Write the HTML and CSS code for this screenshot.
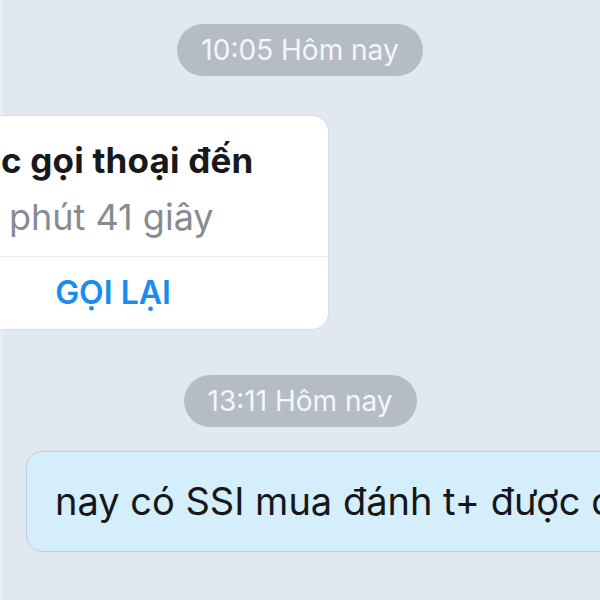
FILE: index.html
```html
<!DOCTYPE html>
<html lang="vi">
<head>
  <meta charset="UTF-8" />
  <meta name="viewport" content="width=device-width, initial-scale=1.0"/>
  <title>Tin nhắn</title>
  <link rel="stylesheet" href="styles.css">
</head>
<body>
  <div class="chat">
    <div class="time"><span>10:05 Hôm nay</span></div>

    <div class="call-card">
      <div class="call-info">
        <div class="call-title">c gọi thoại đến</div>
        <div class="call-length">phút 41 giây</div>
      </div>
      <div class="call-action">GỌI LẠI</div>
    </div>

    <div class="time second"><span>13:11 Hôm nay</span></div>

    <div class="bubble">nay có SSI mua đánh t+ được đ</div>
  </div>
</body>
</html>
```

FILE: styles.css
```css
body {
  margin: 0;
  background: #e2e8f0;
  font-family: Inter, "Noto Sans", sans-serif;
  overflow: hidden;
  height: 600px;
}

.chat {
  display: flex;
  flex-direction: column;
  padding-top: 24px;
  box-shadow: inset 3px 0 #e9eef5;
  height: 600px;
  box-sizing: border-box;
  overflow: hidden;
}

.time {
  display: flex;
  justify-content: center;
}

.time span {
  background: #b6bcc5;
  color: #f4f6f9;
  font-size: 28px;
  height: 52px;
  line-height: 52px;
  padding: 0 24px;
  border-radius: 26px;
}

.time.second {
  margin-top: 45px;
}

.call-card {
  flex-shrink: 0;
  margin-top: 39px;
  margin-left: -103px;
  width: 432px;
  background: #fff;
  border: 1px solid #d9dde3;
  border-radius: 17px;
  box-sizing: border-box;
}

.call-info {
  padding: 24px 0 19px 103px;
  border-bottom: 1px solid #e8ebef;
}

.call-title {
  font-size: 35px;
  font-weight: 700;
  color: #18191b;
  line-height: 40px;
  letter-spacing: 0.2px;
}

.call-length {
  font-size: 36px;
  color: #878b91;
  line-height: 40px;
  margin-top: 17px;
  padding-left: 8px;
}

.call-action {
  text-align: center;
  color: #1a8cf0;
  font-size: 32px;
  font-weight: 600;
  line-height: 72px;
}

.bubble {
  flex-shrink: 0;
  margin: 24px 0 0 26px;
  width: 640px;
  height: 101px;
  box-sizing: border-box;
  background: #d5eefb;
  border: 1px solid #b8cfdf;
  border-radius: 16px;
  padding-left: 28px;
  font-size: 38px;
  line-height: 99px;
  color: #161719;
  white-space: nowrap;
}
```
